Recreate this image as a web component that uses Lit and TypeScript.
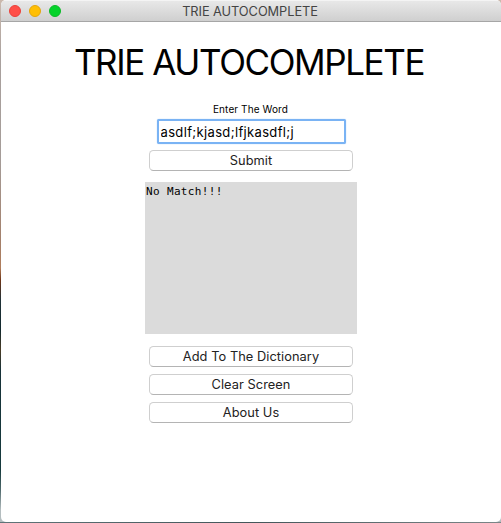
import { LitElement, html, css } from "lit";
import { customElement, property } from "lit/decorators.js";

@customElement("push-button")
class PushButton extends LitElement {
  static styles = css`
    :host { display: block; width: 204px; height: 21px; }
    button {
      display: flex; align-items: center; justify-content: center;
      width: 100%; height: 100%; box-sizing: border-box; margin: 0; padding: 0;
      border: 1px solid #cfcfcf; border-bottom-color: #b4b4b4; border-radius: 4.5px;
      background: #fff; color: #222;
      font: 12.8px/19px Inter, sans-serif; letter-spacing: 0.06px;
      white-space: nowrap;
    }
  `;
  render() {
    return html`<button><slot></slot></button>`;
  }
}

@customElement("title-bar")
class TitleBar extends LitElement {
  @property() label = "";
  static styles = css`
    :host {
      display: grid; grid-template-columns: 68px 1fr 68px; align-items: center;
      height: 22px; box-sizing: border-box; border-bottom: 1px solid #a6a6a6;
      border-top: 1px solid #f4f4f4;
      background: linear-gradient(#e8e8e8, #cfcfcf);
    }
    .lights { display: flex; gap: 8px; padding-left: 8px; }
    .light { width: 12px; height: 12px; border-radius: 50%; box-sizing: border-box; border: 1px solid; }
    .close { background: #ff4f48; border-color: #e9413b; }
    .min { background: #ffbf05; border-color: #e3a60d; }
    .max { background: #05d32b; border-color: #0cb928; }
    .label {
      text-align: center; color: #444; white-space: nowrap; padding: 1px 2px 0 0;
      font: 12.8px/18px Inter, sans-serif; letter-spacing: -0.06px;
    }
  `;
  render() {
    return html`
      <div class="lights">
        <span class="light close"></span><span class="light min"></span><span class="light max"></span>
      </div>
      <div class="label">${this.label}</div>
    `;
  }
}

@customElement("app-root")
class AppRoot extends LitElement {
  static styles = css`
    :host {
      display: block; height: 523px; box-sizing: border-box; padding: 0 0 1px 1px; overflow: hidden;
      background:
        linear-gradient(90deg, #5f7478, #44565a 50%, #7b8688) bottom / 100% 1px no-repeat,
        linear-gradient(#cbb9ad 0, #a9a19e 60px, #a59c98 160px, #a3806b 240px, #b07d5b 268px,
          #6e3518 280px, #213238 300px, #12292e 330px, #4a3c26 350px, #173238 370px,
          #163a3d 470px, #506a6d 490px, #b4bdbf 510px);
    }
    .window {
      height: 522px; background: #fff; border-radius: 5px; overflow: hidden;
      display: flex; flex-direction: column;
    }
    .content { display: flex; flex-direction: column; align-items: center; }
    h1 {
      margin: 18px 0 0; padding-right: 4px; font: 400 35px/44px Inter, sans-serif; letter-spacing: -1.4px;
      color: #000; white-space: nowrap;
    }
    label { margin-top: 18px; padding-right: 1px; font: 10px/14px Inter, sans-serif; letter-spacing: 0.1px; color: #000; }
    input {
      width: 189px; height: 25px; box-sizing: border-box; margin: 3px 0 0; padding: 0 2px;
      border: 2px solid #7ab3f4; border-radius: 2px; outline: none; box-shadow: 0 0 1px #7ab3f4;
      background: #fff; color: #000; font: 13px/21px Inter, sans-serif; letter-spacing: 0.34px;
    }
    .submit { margin-top: 6px; }
    .output {
      width: 212px; height: 152px; box-sizing: border-box; margin: 11px 0 12px; padding: 3px 1px;
      background: #dbdbdb; color: #000; font: 11px/14px "DejaVu Sans Mono", monospace;
      letter-spacing: 0.35px;
    }
    .actions { display: flex; flex-direction: column; gap: 7px; }
  `;
  render() {
    return html`
      <div class="window">
        <title-bar label="TRIE AUTOCOMPLETE"></title-bar>
        <div class="content">
          <h1>TRIE AUTOCOMPLETE</h1>
          <label for="word">Enter The Word</label>
          <input id="word" .value=${"asdlf;kjasd;lfjkasdfl;j"} spellcheck="false" />
          <push-button class="submit">Submit</push-button>
          <div class="output">No Match!!!</div>
          <div class="actions">
            <push-button>Add To The Dictionary</push-button>
            <push-button>Clear Screen</push-button>
            <push-button>About Us</push-button>
          </div>
        </div>
      </div>
    `;
  }
}
